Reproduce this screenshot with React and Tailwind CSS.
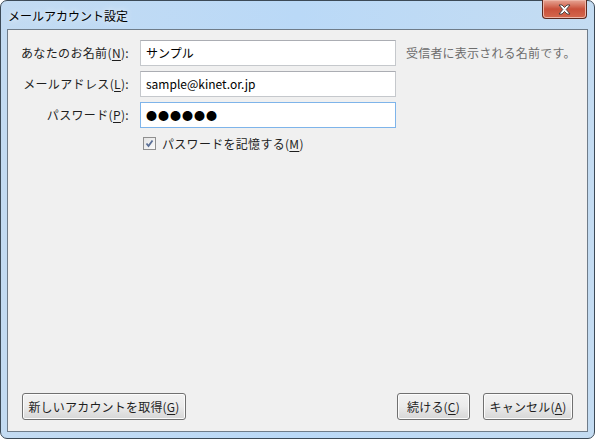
import React from 'react';

const FONT = { fontFamily: '"Noto Sans CJK JP", "Noto Sans", sans-serif' };

const Mn = ({ c }) => <span className="underline underline-offset-2">{c}</span>;

const Field = ({ label, mn, value, focused, password, hint }) => (
  <div className="flex items-center h-[26px]">
    <label className="w-[122px] text-right text-[12px] tracking-[0.35px] text-[#1e1e1e] pr-[1px]">
      {label}(<Mn c={mn} />):
    </label>
    <div
      className={`ml-[10px] w-[256px] h-[26px] bg-white border flex items-center px-[5px] text-[12px] text-black ${
        focused ? 'border-[#7eb4ea]' : 'border-[#c5c8cc] border-t-[#abadb3]'
      }`}
    >
      {password ? <span className="text-[11px] tracking-[1px]">{value}</span> : value}
    </div>
    {hint && <span className="ml-[10px] text-[12px] tracking-[0.2px] text-[#6d6d6d]">{hint}</span>}
  </div>
);

const Btn = ({ children, w }) => (
  <button
    className={`${w} h-[27px] rounded-[3px] border border-[#707070] text-[12px] tracking-[0.2px] text-[#1e1e1e] bg-gradient-to-b from-[#f2f2f2] via-[#ebebeb] to-[#d6d6d6] shadow-[inset_0_0_0_1px_#fcfcfc]`}
  >
    {children}
  </button>
);

const App = () => {
  return (
    <div className="w-[595px] h-[439px] bg-white" style={FONT}>
      <div className="w-full h-full rounded-[7px] border border-[#3c4a57] bg-gradient-to-r from-[#c3dbf2] via-[#bad9f7] to-[#c4dcf2] flex flex-col px-[6px] pb-[6px]">
        {/* title bar */}
        <div className="h-[28px] flex items-start justify-between shrink-0">
          <span className="text-[12px] text-black mt-[6px] ml-[1px] [text-shadow:0_0_6px_#ffffff]">
            メールアカウント設定
          </span>
          <div className="w-[45px] h-[19px] -mt-[1px] mr-[1px] rounded-b-[4px] border border-[#5b2a21] border-t-0 bg-gradient-to-b from-[#e6a595] via-[#c9503a] to-[#d4674d] flex items-center justify-center shadow-[inset_0_0_0_1px_#eeb5a6]">
            <svg width="15" height="11" viewBox="0 0 15 11">
              <path
                d="M2 1 L5 1 L7.5 3.5 L10 1 L13 1 L9.2 5.5 L13 10 L10 10 L7.5 7.5 L5 10 L2 10 L5.8 5.5 Z"
                fill="#ffffff"
                stroke="#3b3b3b"
                strokeWidth="0.9"
                strokeLinejoin="round"
              />
            </svg>
          </div>
        </div>

        {/* client area */}
        <div className="flex-1 bg-[#f0f0f0] border border-[#6f7c89] flex flex-col">
          <div className="flex flex-col gap-[5px] pt-[10px]">
            <Field label="あなたのお名前" mn="N" value="サンプル" hint="受信者に表示される名前です。" />
            <Field label="メールアドレス" mn="L" value="sample@kinet.or.jp" />
            <Field label="パスワード" mn="P" value="●●●●●●" password focused />
          </div>

          <div className="flex items-center mt-[9px] ml-[135px] h-[13px]">
            <div className="w-[13px] h-[13px] border border-[#8f8f8f] bg-gradient-to-br from-[#e4e4e4] to-[#fafafa] flex items-center justify-center">
              <svg width="9" height="9" viewBox="0 0 9 9">
                <path d="M1.5 4.5 L3.5 7 L7.5 1.5" fill="none" stroke="#5a6f96" strokeWidth="1.8" />
              </svg>
            </div>
            <span className="ml-[6px] text-[12px] tracking-[0.3px] text-[#1e1e1e]">
              パスワードを記憶する(<Mn c="M" />)
            </span>
          </div>

          <div className="mt-auto mb-[11px] pl-[14px] pr-[14px] flex items-center">
            <Btn w="w-[164px]">
              新しいアカウントを取得(<Mn c="G" />)
            </Btn>
            <div className="ml-auto flex gap-[13px]">
              <Btn w="w-[73px]">
                続ける(<Mn c="C" />)
              </Btn>
              <Btn w="w-[90px]">
                キャンセル(<Mn c="A" />)
              </Btn>
            </div>
          </div>
        </div>
      </div>
    </div>
  );
};

export default App;
